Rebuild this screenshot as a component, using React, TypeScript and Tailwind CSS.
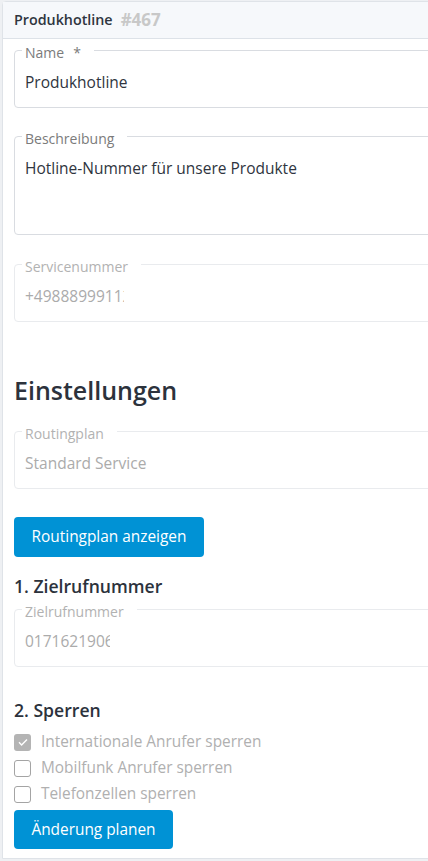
import type { ReactNode } from "react";

function Field({
  label,
  children,
  disabled,
  tall,
}: {
  label: ReactNode;
  children: ReactNode;
  disabled?: boolean;
  tall?: boolean;
}) {
  return (
    <fieldset
      className={`rounded-[4px] border pl-[10px] pr-3 pt-[13px] pb-[14px] ${
        disabled ? "border-[#e9ebee]" : "border-[#d9dce1]"
      }`}
    >
      <legend
        className={`relative top-[3px] -ml-[3px] pl-[3px] pr-[13px] text-[14px] leading-4 ${
          disabled ? "text-[#b2b2b2]" : "text-[#7b7b7b]"
        }`}
      >
        {label}
      </legend>
      <div
        className={`text-[15.5px] leading-[22px] ${disabled ? "text-[#ababab]" : "text-[#2f3540]"} ${
          tall ? "min-h-[63px]" : ""
        }`}
      >
        {children}
      </div>
    </fieldset>
  );
}

function Check({ checked, label }: { checked?: boolean; label: string }) {
  return (
    <label className="flex h-[26px] items-center gap-[10px]">
      {checked ? (
        <span className="flex h-[17px] w-[17px] items-center justify-center rounded-[3px] bg-[#b4b4b4]">
          <svg width="12" height="12" viewBox="0 0 12 12" fill="none">
            <path d="M2 6.3l2.6 2.6L10 3.4" stroke="white" strokeWidth="1.4" />
          </svg>
        </span>
      ) : (
        <span className="h-[17px] w-[17px] rounded-[3px] border-[1.5px] border-[#a4a4a4] bg-white" />
      )}
      <span className="text-[15.4px] text-[#b0b0b0]">{label}</span>
    </label>
  );
}

export default function App() {
  return (
    <div
      className="min-h-[861px] overflow-hidden bg-[#eef0f3] pl-[2px] pt-[1px]"
      style={{ fontFamily: '"Open Sans", "Liberation Sans", sans-serif' }}
    >
      <div className="w-[480px] rounded-tl-[4px] border border-[#dfe3e8] bg-white">
        <div className="flex h-[37px] items-center gap-[8px] border-b border-[#dde2e8] bg-[#f6f8fb] pl-[11px]">
          <span className="text-[14.3px] font-semibold text-[#2f3540]">Produkhotline</span>
          <span className="text-[17px] font-bold text-[#c8c8c8]">#467</span>
        </div>

        <div className="flex flex-col pl-[11px] pt-[3px] pb-[9px]">
          <Field
            label={
              <>
                Name<span className="ml-[9px]">*</span>
              </>
            }
          >
            Produkhotline
          </Field>
          <div className="h-[20px]" />
          <Field label="Beschreibung" tall>
            Hotline-Nummer für unsere Produkte
          </Field>
          <div className="h-[21px]" />
          <Field label="Servicenummer" disabled>
            <span className="block w-[99px] overflow-hidden whitespace-nowrap">+49888999112</span>
          </Field>

          <h2 className="mt-[51px] text-[25px] font-semibold leading-[34px] text-[#2c323c]">Einstellungen</h2>

          <div className="h-[16px]" />
          <Field label="Routingplan" disabled>
            Standard Service
          </Field>

          <button
            type="button"
            className="mt-[28px] h-[40px] w-[190px] rounded-[4px] bg-[#0092d5] text-[15.4px] text-white"
          >
            Routingplan anzeigen
          </button>

          <h3 className="mt-[16px] text-[17.6px] font-semibold leading-[26px] text-[#2c323c]">1. Zielrufnummer</h3>
          <div className="h-[2px]" />
          <Field label="Zielrufnummer" disabled>
            <span className="block w-[85px] overflow-hidden whitespace-nowrap">01716219060</span>
          </Field>

          <h3 className="mt-[30px] text-[17.6px] font-semibold leading-[26px] text-[#2c323c]">2. Sperren</h3>
          <div className="mt-[6px] flex flex-col">
            <Check checked label="Internationale Anrufer sperren" />
            <Check label="Mobilfunk Anrufer sperren" />
            <Check label="Telefonzellen sperren" />
          </div>
          <button
            type="button"
            className="mt-[3px] h-[39px] w-[159px] rounded-[4px] bg-[#0092d5] text-[15.4px] text-white"
          >
            Änderung planen
          </button>
        </div>
      </div>
    </div>
  );
}
